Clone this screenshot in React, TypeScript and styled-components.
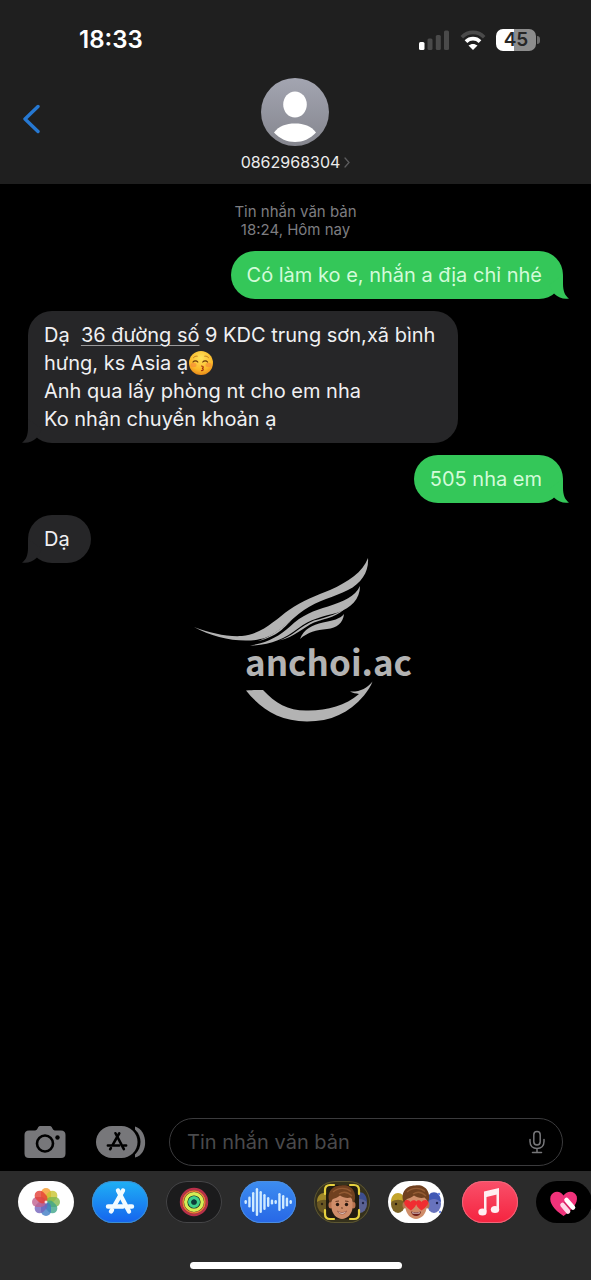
import React from "react";
import styled, { createGlobalStyle } from "styled-components";

const GlobalStyle = createGlobalStyle`
  *, *::before, *::after { box-sizing: border-box; }
  body {
    margin: 0;
    background: #000;
    font-family: Inter, "Noto Sans", sans-serif;
    color: #f0f0f2;
  }
  button {
    border: 0;
    padding: 0;
    background: none;
    color: inherit;
    font: inherit;
    cursor: pointer;
  }
  svg { display: block; }
`;

const Screen = styled.div`
  position: relative;
  display: flex;
  flex-direction: column;
  min-height: 100vh;
  overflow: hidden;
  background: #000;
`;

const Header = styled.header`
  background: #1f1f1f;
  padding-bottom: 12px;
`;

const StatusBar = styled.div`
  display: flex;
  align-items: center;
  justify-content: space-between;
  padding: 26px 51px 24px 79px;
`;

const Clock = styled.time`
  font-size: 24px;
  font-weight: 600;
  line-height: 28px;
  color: #fff;
`;

const StatusIcons = styled.div`
  display: flex;
  align-items: center;
  gap: 10px;
`;

const BatteryWrap = styled.div`
  display: flex;
  align-items: center;
  gap: 1px;
`;

const BatteryBody = styled.span<{ $level: number }>`
  width: 40px;
  height: 22px;
  border-radius: 7px;
  background: linear-gradient(
    90deg,
    #fff ${(p) => p.$level}%,
    #8c8c8c ${(p) => p.$level}%
  );
  color: #262626;
  font-size: 19px;
  font-weight: 600;
  line-height: 22px;
  text-align: center;
`;

const BatteryTip = styled.span`
  width: 3px;
  height: 8px;
  border-radius: 0 3px 3px 0;
  background: #6b6b6b;
`;

const NavBar = styled.nav`
  display: grid;
  grid-template-columns: 1fr auto 1fr;
  align-items: center;
  padding: 0 22px;
`;

const BackButton = styled.button`
  justify-self: start;
  padding-bottom: 12px;
`;

const Contact = styled.button`
  display: flex;
  flex-direction: column;
  align-items: center;
  gap: 6px;
`;

const ContactName = styled.span`
  display: flex;
  align-items: center;
  gap: 4px;
  font-size: 16px;
  line-height: 20px;
  color: #ececec;
`;

const Thread = styled.main`
  flex: 1;
  display: flex;
  flex-direction: column;
  gap: 12px;
  padding: 19px 28px 24px;
`;

const Stamp = styled.p`
  margin: 0;
  font-size: 15px;
  line-height: 18px;
  text-align: center;
  color: #7d7d80;
`;

const Bubble = styled.div<{ $sent?: boolean }>`
  position: relative;
  align-self: ${(p) => (p.$sent ? "flex-end" : "flex-start")};
  max-width: 430px;
  padding: 10px 21px 10px 16px;
  border-radius: 24px;
  background: ${(p) => (p.$sent ? "#34c759" : "#262628")};
  color: ${(p) => (p.$sent ? "#d3fbd9" : "#f0f0f2")};
  font-size: 20px;
  line-height: 28px;
  white-space: pre-line;
`;

const TailShape = styled.svg<{ $sent?: boolean }>`
  position: absolute;
  bottom: 0;
  ${(p) => (p.$sent ? "right: -6px;" : "left: -6px; transform: scaleX(-1);")}
  fill: ${(p) => (p.$sent ? "#34c759" : "#262628")};
`;

const AddressLink = styled.a`
  color: inherit;
  text-decoration: underline;
  text-decoration-color: #9a9a9c;
  text-decoration-thickness: 1px;
  text-underline-offset: 3px;
`;

const EmojiGlyph = styled.svg`
  display: inline-block;
  vertical-align: -6px;
`;

const Watermark = styled.div`
  position: absolute;
  inset: 0;
  display: flex;
  align-items: center;
  justify-content: center;
  padding: 0 0 4px 19px;
  pointer-events: none;
`;

const Composer = styled.form`
  display: flex;
  align-items: center;
  padding: 0 28px 5px 24px;
`;

const CameraButton = styled.button`
  margin-right: 28px;
`;

const StoreButton = styled.button`
  margin-right: 23px;
`;

const Field = styled.div`
  flex: 1;
  min-width: 0;
  display: flex;
  align-items: center;
  height: 48px;
  padding: 0 17px;
  border: 1px solid #3b3b3d;
  border-radius: 24px;
`;

const MessageInput = styled.input`
  flex: 1;
  min-width: 0;
  padding: 0;
  border: 0;
  outline: 0;
  background: none;
  color: #f0f0f2;
  font: inherit;
  font-size: 20px;
  line-height: 28px;
  &::placeholder { color: #4a4a4c; opacity: 1; }
`;

const Tray = styled.footer`
  background: #2b2b2b;
  padding: 10px 0 11px;
`;

const AppRow = styled.div`
  display: flex;
  gap: 18px;
  padding-left: 18px;
  overflow: hidden;
`;

const AppButton = styled.button<{ $bg: string; $edge?: string }>`
  flex: none;
  width: 56px;
  height: 42px;
  border-radius: 21px;
  overflow: hidden;
  background: ${(p) => p.$bg};
  box-shadow: inset 0 0 0 1px ${(p) => p.$edge ?? "transparent"};
`;

const HomeBar = styled.div`
  width: 212px;
  height: 7px;
  margin: 39px auto 0;
  border-radius: 4px;
  background: #fff;
`;

const Tail = ({ sent }: { sent?: boolean }) => (
  <TailShape $sent={sent} width="20" height="24" viewBox="0 0 20 24" aria-hidden="true">
    <path d="M14 0V9C14 16 16 21 20 23.400C15 24.600 9.500 22.500 5.500 19L0 10Z" />
  </TailShape>
);

const Signal = () => (
  <svg width="31" height="21" viewBox="0 0 31 21" aria-label="Signal">
    <rect x="0" y="12" width="5.500" height="8" rx="1.500" fill="#fff" />
    <rect x="8.500" y="8.500" width="5" height="11.500" rx="1.500" fill="#4a4a4a" />
    <rect x="16.800" y="5" width="5" height="15" rx="1.500" fill="#4a4a4a" />
    <rect x="25" y="0.500" width="5" height="19.500" rx="1.500" fill="#4a4a4a" />
  </svg>
);

const Wifi = () => (
  <svg width="26" height="21" viewBox="0 0 26 21" fill="none" aria-label="Wi-Fi">
    <path d="M1.800 7.200C8 .8 18 .8 24.200 7.200" stroke="#4a4a4a" strokeWidth="3.600" />
    <path d="M6 11.600C10 7.700 16 7.700 20 11.600" stroke="#fff" strokeWidth="3.800" />
    <path d="M13 20L8.500 15.600C11.200 13.400 14.800 13.400 17.500 15.600Z" fill="#fff" />
  </svg>
);

const Avatar = () => (
  <svg width="68" height="68" viewBox="0 0 68 68" aria-hidden="true">
    <defs>
      <linearGradient id="avatar" x1="0" y1="0" x2="0" y2="1">
        <stop offset="0" stopColor="#a3a5b1" />
        <stop offset="1" stopColor="#85868e" />
      </linearGradient>
    </defs>
    <circle cx="34" cy="34" r="34" fill="url(#avatar)" />
    <ellipse cx="34" cy="26.500" rx="11.800" ry="13" fill="#fff" />
    <path d="M13 54.500C18 48 25 45.500 34 45.500S50 48 55 54.500C49 61 42 64 34 64S19 61 13 54.500Z" fill="#fff" />
  </svg>
);

const KissEmoji = () => (
  <EmojiGlyph width="26" height="26" viewBox="0 0 26 26" role="img" aria-label="😚">
    <defs>
      <radialGradient id="face" cx=".5" cy=".3" r=".7">
        <stop offset="0" stopColor="#ffe45c" />
        <stop offset=".7" stopColor="#fbb829" />
        <stop offset="1" stopColor="#e8891a" />
      </radialGradient>
    </defs>
    <circle cx="13" cy="13" r="12" fill="url(#face)" />
    <ellipse cx="5.500" cy="15" rx="3" ry="2.200" fill="#f4813a" opacity=".55" />
    <ellipse cx="20.500" cy="15" rx="3" ry="2.200" fill="#f4813a" opacity=".55" />
    <g fill="none" stroke="#6b3a0b" strokeWidth="1.200" strokeLinecap="round">
      <path d="M5 12C6.200 10.400 8.600 10.400 9.800 12" />
      <path d="M14.800 12C16 10.400 18.400 10.400 19.600 12" />
      <path d="M5.500 7.600C6.500 6.400 7.800 6 9.200 6.200M16.800 6.200C18.200 6 19.500 6.400 20.500 7.600" strokeWidth="1" stroke="#c07a1a" />
      <path d="M13.500 16C15.800 16 15.800 18 14 18.300C15.800 18.600 15.600 20.600 13.500 20.600" stroke="#a3300f" />
    </g>
  </EmojiGlyph>
);

const Logo = () => (
  <svg width="250" height="185" viewBox="0 0 250 185" fill="#b3b3b3" aria-label="anchoi.ac">
    <path d="M14 81C30 87 47 91 62 90C83 88 96 73 109 64C122 55 137 49 150 44C168 36 183 26 188 12C189 25 182 37 168 44C154 51 138 54.500 124 64C110 74 100 86 86 91.500C66 98.500 36 93 14 81Z" />
    <path d="M78 95C93 90 101 82 112 73.500C106 80 97 91 78 95Z" />
    <path d="M70 99.500C88 97 99 90 110 80.500C122 69 134 64.500 148 60.500C164 55 175 51 180 40C180 53 171 62 158 66.500C143 70.500 130 73 118 82.500C104 93 90 99.500 70 99.500Z" />
    <path d="M99 94.500C112 91 121 79.500 134 74.500C148 71 160 67.500 167 60C159 71 146 72 134 76.500C123 81.500 115 91 99 94.500Z" />
    <path d="M120 93C124 83 132 79 143 76.500C153 74.500 160 73 164 68C163 77 157 82 147 83C136 84 128 86 120 93Z" />
    <text x="65" y="130" fontFamily="'Noto Sans CJK SC', 'Noto Sans', sans-serif" fontSize="35" fontWeight="700">
      anchoi.ac
    </text>
    <path d="M66 144.500C74 144 79 144 83 144C95 157 108 164.500 126 164.500C146 165 165 160 179 148C176 147 173 147.500 170 145.500C180 146 187 142.500 192.500 135.500C191 140 187.500 145 184 149.500C169 167 151 175.500 127 175.500C99 175 81 163 66 144.500Z" />
  </svg>
);

const StoreMark = ({ color, width }: { color: string; width: number }) => (
  <g fill="none" stroke={color} strokeWidth={width} strokeLinecap="round">
    <path d="M-2 -11.500L9 9.500" />
    <path d="M3 -11.500L-5.500 3.500" />
    <path d="M-12 4.500H3M9 4.500H12" />
    <path d="M-8 8L-9 9.500" />
  </g>
);

const Camera = () => (
  <svg width="42" height="34" viewBox="0 0 42 34" aria-hidden="true">
    <path d="M5 5.500H11C12.500 5.500 13 4.500 13.800 3C14.500 1.500 15 1 17 1H25C27 1 27.500 1.500 28.200 3C29 4.500 29.500 5.500 31 5.500H37C40 5.500 41.500 7 41.500 10V28.500C41.500 31.500 40 33 37 33H5C2 33 .5 31.500 .5 28.500V10C.5 7 2 5.500 5 5.500Z" fill="#77777a" />
    <circle cx="21" cy="18.500" r="8" fill="none" stroke="#000" strokeWidth="2.600" />
    <circle cx="33.500" cy="12.500" r="2.200" fill="#000" />
  </svg>
);

const StoreGrey = () => (
  <svg width="52" height="34" viewBox="0 0 52 34" aria-hidden="true">
    <path d="M41 1.500C54 5 55 29 41 32.500Z" fill="#77777a" />
    <rect x="0" y="0" width="46.500" height="34" rx="17" fill="#000" />
    <rect x="2" y="1" width="41.500" height="32" rx="16" fill="#77777a" />
    <g transform="translate(23 17) scale(.76)">
      <StoreMark color="#000" width={3.400} />
    </g>
  </svg>
);

const Mic = () => (
  <svg width="16" height="24" viewBox="0 0 16 24" fill="none" stroke="#77777a" strokeWidth="1.500" strokeLinecap="round" aria-hidden="true">
    <rect x="4.800" y="1.500" width="6.400" height="13.500" rx="3.200" />
    <path d="M1 9.500V11.500C1 16 4 18.500 8 18.500S15 16 15 11.500V9.500M8 18.500V22.500M3.500 22.500H12.500" />
  </svg>
);

const AppArt = ({ children }: { children: React.ReactNode }) => (
  <svg width="56" height="42" viewBox="0 0 56 42" aria-hidden="true">
    {children}
  </svg>
);

const petals = ["#f59a2c", "#c9c42f", "#7fb84e", "#3fa58a", "#3f7cc4", "#7363bb", "#c0608f", "#e33f35"];

const PhotosArt = () => (
  <AppArt>
    {petals.map((color, i) => (
      <rect
        key={color}
        x="23"
        y="7"
        width="10"
        height="14"
        rx="5"
        fill={color}
        opacity=".8"
        transform={`rotate(${i * 45} 28 21)`}
      />
    ))}
    <circle cx="28" cy="21" r="1.500" fill="#fff" opacity=".8" />
  </AppArt>
);

const StoreArt = () => (
  <AppArt>
    <g transform="translate(28 21)">
      <StoreMark color="#f2fbff" width={4.400} />
    </g>
  </AppArt>
);

const RingsArt = () => (
  <AppArt>
    <g fill="none">
      <circle cx="28" cy="21" r="13" stroke="#b8304a" strokeWidth="2.400" />
      <circle cx="28" cy="21" r="11" stroke="#ee7a3a" strokeWidth="1.600" />
      <circle cx="28" cy="21" r="8.300" stroke="#d6ee55" strokeWidth="3.400" />
      <circle cx="28" cy="21" r="4.300" stroke="#3fd08c" strokeWidth="3.400" />
    </g>
    <circle cx="28" cy="21" r="2.600" fill="#0b3b3c" />
  </AppArt>
);

const waveHeights = [4, 11, 20, 28, 22, 16, 10, 5, 4, 18, 14, 9, 4];

const WaveArt = () => (
  <AppArt>
    {waveHeights.map((h, i) => (
      <rect key={i} x={4.500 + i * 3.750} y={21 - h / 2} width="2.400" height={h} rx="1.200" fill="#cfeaff" />
    ))}
  </AppArt>
);

const Friends = () => (
  <>
    <ellipse cx="10" cy="23" rx="7" ry="9" fill="#7d6426" />
    <path d="M3 21C3 9 17 9 17 21C12 18 8 18 3 21Z" fill="#c3a42c" />
    <circle cx="8" cy="23" r="1.200" fill="#2b1d10" />
    <ellipse cx="46" cy="23" rx="7" ry="9" fill="#6873bd" />
    <path d="M39 21C39 8 53 8 53 21C48 17 44 17 39 21Z" fill="#4058b4" />
    <circle cx="49" cy="22" r="1.200" fill="#1c2050" />
  </>
);

const Face = () => (
  <>
    <ellipse cx="17" cy="24" rx="2.500" ry="3.500" fill="#b97350" />
    <ellipse cx="39" cy="24" rx="2.500" ry="3.500" fill="#b97350" />
    <path d="M17.500 17C17.500 9 38.500 9 38.500 17V26C38.500 33 33 38 28 38S17.500 33 17.500 26Z" fill="#cf8d69" />
    <path d="M16 22C12 13 17 4.500 27 4.500C37 2.500 44 11 40 22C39 19 38 18 36.500 16.500C33 17.500 29 16.500 26 14.500C23 17 20.500 17.500 19 18C18 19 17 20 16 22Z" fill="#70401f" />
    <path d="M19 11C24 6.500 32 6 37 10.500M25 13C29 10.500 34 11 38 15" stroke="#935a32" strokeWidth="1.300" fill="none" />
  </>
);

const CameraMemojiArt = () => (
  <AppArt>
    <g opacity=".75"><Friends /></g>
    <rect x="12" y="4" width="33" height="34" rx="5" fill="#211b10" />
    <Face />
    <g fill="#26160e">
      <circle cx="23.500" cy="23.500" r="1.700" />
      <circle cx="32.500" cy="23.500" r="1.700" />
    </g>
    <path d="M21.500 20.500L25 20M31 20L34.500 20.500M27.500 26.500L28.500 27.500" stroke="#6a3d25" strokeWidth="1.200" fill="none" />
    <path d="M23.500 30C26 32 30 32 32.500 30C31.500 34 25 34 23.500 30Z" fill="#fff" stroke="#8b4939" strokeWidth=".7" />
    <path d="M11 13V9Q11 4 16 4H20M36 4H40Q45 4 45 9V13M45 29V33Q45 38 40 38H36M20 38H16Q11 38 11 33V29" fill="none" stroke="#e6d13f" strokeWidth="2.200" strokeLinecap="round" />
  </AppArt>
);

const StickerArt = () => (
  <AppArt>
    <Friends />
    <circle cx="51" cy="13" r="1.200" fill="#6a86e8" />
    <circle cx="52" cy="31" r="1.200" fill="#6a86e8" />
    <Face />
    <g fill="#f02d31">
      <path d="M23 29.500C18 26 15.500 23 16.500 20.500C18 18 21.500 19 22.500 21C24 18.500 28 18.500 28.500 21C28.800 24 26.500 27 23 29.500Z" />
      <path d="M33.500 29.500C30 27 27.500 24 28 21C29 18.500 32 18.500 33.500 21C34.500 19 38.500 18 40 20.500C41 23 38 26.500 33.500 29.500Z" />
    </g>
    <path d="M23 30.500C26 31.500 30 31.500 33 30.500C32.500 36.500 24 36.500 23 30.500Z" fill="#6f1d1b" />
    <path d="M24 31.200C27 32 29 32 32 31.200L31.500 32.600H24.500Z" fill="#fff" />
  </AppArt>
);

const MusicArt = () => (
  <AppArt>
    <path d="M22 10.500L37 7V13L24.500 16V30.500H22Z" fill="#ffeef1" />
    <path d="M34.500 9H37V28H34.500Z" fill="#ffeef1" />
    <ellipse cx="20.500" cy="31" rx="4.200" ry="3.600" fill="#ffeef1" />
    <ellipse cx="33" cy="28.500" rx="4.200" ry="3.600" fill="#ffeef1" />
  </AppArt>
);

const HeartArt = () => (
  <AppArt>
    <path d="M27.500 35C18 28.500 13 22 14.500 15.500C16.500 9.500 24.500 9 27.500 14.500C31 9 39 9.500 40.800 15.500C42 22 37 28.500 27.500 35Z" fill="#f0327a" />
    <path d="M26.500 24L32 30.500" stroke="#ffd9e8" strokeWidth="4.600" strokeLinecap="round" />
    <path d="M30.500 19L37 26.500" stroke="#fff" strokeWidth="4.600" strokeLinecap="round" />
    <path d="M28 21L35 29" stroke="#c42761" strokeWidth="1" />
  </AppArt>
);

const apps = [
  { name: "Photos", bg: "#fff", Art: PhotosArt },
  { name: "App Store", bg: "linear-gradient(#1fb0f5, #1563ee)", edge: "#3d8fd0", Art: StoreArt },
  { name: "Fitness", bg: "#1b1b1c", edge: "#454547", Art: RingsArt },
  { name: "Audio", bg: "linear-gradient(#3d8df0, #2767e6)", edge: "#4b8ee0", Art: WaveArt },
  { name: "Memoji", bg: "#35311c", edge: "#5c5632", Art: CameraMemojiArt },
  { name: "Stickers", bg: "#fff", Art: StickerArt },
  { name: "Music", bg: "linear-gradient(#f9506a, #f5233f)", edge: "#f0667a", Art: MusicArt },
  { name: "Digital Touch", bg: "#000", Art: HeartArt },
];

export default function App() {
  return (
    <>
      <GlobalStyle />
      <Screen>
        <Header>
          <StatusBar>
            <Clock>18:33</Clock>
            <StatusIcons>
              <Signal />
              <Wifi />
              <BatteryWrap>
                <BatteryBody $level={45}>45</BatteryBody>
                <BatteryTip />
              </BatteryWrap>
            </StatusIcons>
          </StatusBar>
          <NavBar>
            <BackButton type="button" aria-label="Quay lại">
              <svg width="18" height="30" viewBox="0 0 18 30" fill="none" aria-hidden="true">
                <path d="M16 2.500L3 15L16 27.500" stroke="#2678d2" strokeWidth="3.400" strokeLinecap="round" strokeLinejoin="round" />
              </svg>
            </BackButton>
            <Contact type="button">
              <Avatar />
              <ContactName>
                0862968304
                <svg width="6" height="11" viewBox="0 0 6 11" fill="none" aria-hidden="true">
                  <path d="M1 1L5 5.500L1 10" stroke="#5c5c5e" strokeWidth="1.300" strokeLinecap="round" />
                </svg>
              </ContactName>
            </Contact>
          </NavBar>
        </Header>

        <Thread>
          <Stamp>
            Tin nhắn văn bản
            <br />
            18:24, Hôm nay
          </Stamp>
          <Bubble $sent>
            Có làm ko e, nhắn a địa chỉ nhé
            <Tail sent />
          </Bubble>
          <Bubble>
            {"Dạ\u00a0 "}
            <AddressLink href="#map">36 đường số</AddressLink>
            {" 9 KDC trung sơn,xã bình hưng, ks Asia ạ"}
            <KissEmoji />
            {"\nAnh qua lấy phòng nt cho em nha\nKo nhận chuyển khoản ạ"}
            <Tail />
          </Bubble>
          <Bubble $sent>
            505 nha em
            <Tail sent />
          </Bubble>
          <Bubble>
            Dạ
            <Tail />
          </Bubble>
        </Thread>

        <Composer>
          <CameraButton type="button" aria-label="Camera">
            <Camera />
          </CameraButton>
          <StoreButton type="button" aria-label="Ứng dụng">
            <StoreGrey />
          </StoreButton>
          <Field>
            <MessageInput type="text" placeholder="Tin nhắn văn bản" aria-label="Tin nhắn văn bản" />
            <button type="button" aria-label="Đọc chính tả">
              <Mic />
            </button>
          </Field>
        </Composer>

        <Tray>
          <AppRow>
            {apps.map(({ name, bg, edge, Art }) => (
              <AppButton key={name} type="button" aria-label={name} $bg={bg} $edge={edge}>
                <Art />
              </AppButton>
            ))}
          </AppRow>
          <HomeBar />
        </Tray>

        <Watermark>
          <Logo />
        </Watermark>
      </Screen>
    </>
  );
}
